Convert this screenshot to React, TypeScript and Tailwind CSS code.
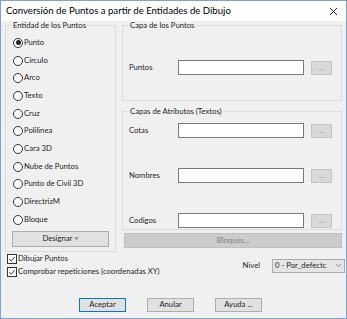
import { ChevronDown } from 'lucide-react'

const ENTIDADES = [
  'Punto',
  'Circulo',
  'Arco',
  'Texto',
  'Cruz',
  'Polilinea',
  'Cara 3D',
  'Nube de Puntos',
  'Punto de Civil 3D',
  'DirectrizM',
  'Bloque',
]

function Radio({ label, checked }: { label: string; checked?: boolean }) {
  return (
    <div className="flex h-[17.7px] items-center">
      <span className="ml-[1px] flex size-[10px] items-center justify-center rounded-full border border-[#333] bg-white">
        {checked && <span className="size-[5px] rounded-full bg-[#222]" />}
      </span>
      <span className="ml-[1px]">{label}</span>
    </div>
  )
}

function Check({ label }: { label: string }) {
  return (
    <div className="flex h-[12.5px] items-center">
      <span className="flex size-[10px] items-center justify-center border border-[#333] bg-white">
        <svg viewBox="0 0 10 10" className="size-[8px]">
          <path d="M1.5 5.2 L4 7.6 L8.6 2.4" fill="none" stroke="#222" strokeWidth="1.1" />
        </svg>
      </span>
      <span className="ml-[1px]">{label}</span>
    </div>
  )
}

function Dots() {
  return (
    <div className="ml-[7px] flex h-[14px] w-[21px] items-center justify-center border border-[#c4c4c4] bg-[#d9d9d9] text-[7px] leading-none text-[#8a8a8a]">
      ...
    </div>
  )
}

function Field({ label, className = '' }: { label: string; className?: string }) {
  return (
    <div className={'flex items-center ' + className}>
      <span className="w-[49px]">{label}</span>
      <div className="h-[15px] w-[126px] border border-[#7a7a7a] bg-white" />
      <Dots />
    </div>
  )
}

function Button({ label, primary }: { label: string; primary?: boolean }) {
  return (
    <div
      className={
        'flex h-[14px] w-[47px] items-center justify-center border bg-[#e1e1e1] ' +
        (primary ? 'border-[#0078d7]' : 'border-[#adadad]')
      }
    >
      {label}
    </div>
  )
}

export default function App() {
  return (
    <div
      className="flex h-[319px] w-[347px] flex-col border border-[#7fa2d6] bg-[#f0f0f0] text-[7.7px] leading-none text-[#1e1e1e]"
      style={{ fontFamily: 'Lato, "Liberation Sans", sans-serif' }}
    >
      {/* Barra de título */}
      <div className="flex h-[20px] shrink-0 items-center justify-between bg-white pl-[5px] pr-[8px]">
        <span className="text-[9.6px] text-black">Conversión de Puntos a partir de Entidades de Dibujo</span>
        <svg viewBox="0 0 10 10" className="size-[9px]">
          <path d="M1 1 L9 9 M9 1 L1 9" stroke="#111" strokeWidth="1" />
        </svg>
      </div>

      <div className="flex pl-[4px]">
        {/* Entidad de los Puntos */}
        <fieldset className="h-[231px] w-[110px] border border-[#dcdcdc] px-[6px]">
          <legend className="px-[1px] leading-[8px]">Entidad de los Puntos</legend>
          <div className="pt-[5px]">
            {ENTIDADES.map((e, i) => (
              <Radio key={e} label={e} checked={i === 0} />
            ))}
          </div>
          <div className="mt-[2px] flex h-[16px] w-[97px] items-center justify-center border border-[#adadad] bg-[#e1e1e1]">
            Designar &lt;
          </div>
        </fieldset>

        <div className="ml-[6px] flex w-[220px] flex-col">
          <fieldset className="h-[80px] border border-[#dcdcdc] pl-[6px]">
            <legend className="px-[1px] leading-[8px]">Capa de los Puntos</legend>
            <Field label="Puntos" className="mt-[31px]" />
          </fieldset>

          <fieldset className="mt-[6px] h-[123px] border border-[#dcdcdc] pl-[6px]">
            <legend className="px-[1px] leading-[8px]">Capas de Atributos (Textos)</legend>
            <Field label="Cotas" className="mt-[8px]" />
            <Field label="Nombres" className="mt-[30px]" />
            <Field label="Codigos" className="mt-[30px]" />
          </fieldset>

          <div className="ml-[2px] mt-[3px] flex h-[15px] items-center justify-center border border-[#bfbfbf] bg-[#cccccc] text-[#838383]">
            Bloques...
          </div>
        </div>
      </div>

      <div className="mt-[1px] flex pl-[6px]">
        <div className="flex flex-col">
          <Check label="Dibujar Puntos" />
          <Check label="Comprobar repeticiones (coordenadas XY)" />
        </div>
        <div className="ml-auto flex items-center pr-[1px]">
          <span className="mr-[12px]">Nivel</span>
          <div className="flex h-[14px] w-[73px] items-center border border-[#acacac] bg-[#e5e5e5] pl-[2px] pr-[1px]">
            <span className="whitespace-nowrap">0 - Por_defectc</span>
            <ChevronDown className="ml-auto size-[9px] shrink-0 text-[#444]" strokeWidth={1.5} />
          </div>
        </div>
      </div>

      <div className="mt-[20px] flex gap-[21px] pl-[78px]">
        <Button label="Aceptar" primary />
        <Button label="Anular" />
        <Button label="Ayuda ..." />
      </div>
    </div>
  )
}
